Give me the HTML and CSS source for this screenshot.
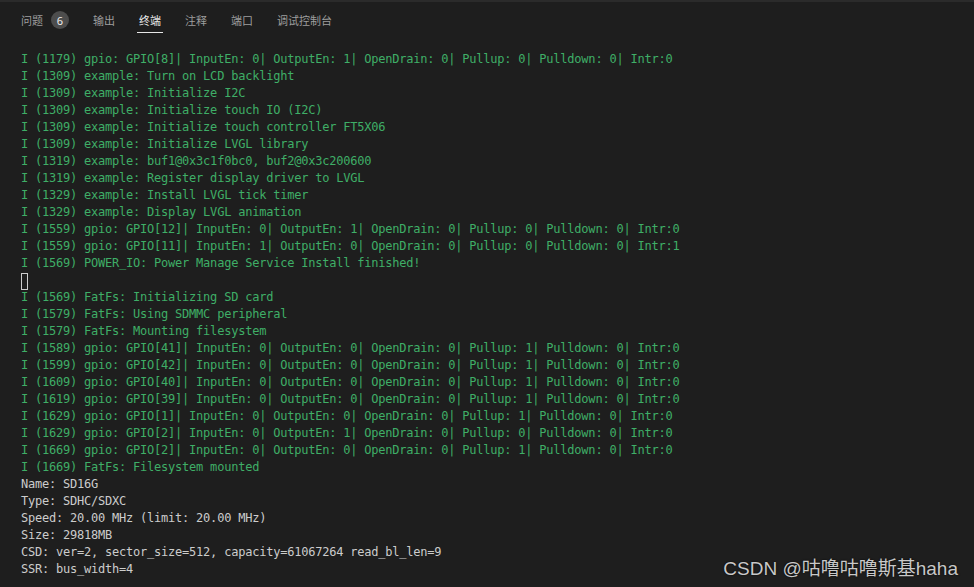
FILE: index.html
```html
<!DOCTYPE html>
<html lang="zh-CN">
<head>
    <meta charset="UTF-8">
    <meta name="viewport" content="width=device-width, initial-scale=1.0">
    <title>终端</title>
    <link rel="stylesheet" href="styles.css">
</head>
<body>
    <div class="panel">
        <div class="tabs">
            <div class="tab">问题 <span class="badge">6</span></div>
            <div class="tab">输出</div>
            <div class="tab active">终端</div>
            <div class="tab">注释</div>
            <div class="tab">端口</div>
            <div class="tab">调试控制台</div>
        </div>
        <div class="terminal">
            <div class="line green">I (1179) gpio: GPIO[8]| InputEn: 0| OutputEn: 1| OpenDrain: 0| Pullup: 0| Pulldown: 0| Intr:0</div>
            <div class="line green">I (1309) example: Turn on LCD backlight</div>
            <div class="line green">I (1309) example: Initialize I2C</div>
            <div class="line green">I (1309) example: Initialize touch IO (I2C)</div>
            <div class="line green">I (1309) example: Initialize touch controller FT5X06</div>
            <div class="line green">I (1309) example: Initialize LVGL library</div>
            <div class="line green">I (1319) example: buf1@0x3c1f0bc0, buf2@0x3c200600</div>
            <div class="line green">I (1319) example: Register display driver to LVGL</div>
            <div class="line green">I (1329) example: Install LVGL tick timer</div>
            <div class="line green">I (1329) example: Display LVGL animation</div>
            <div class="line green">I (1559) gpio: GPIO[12]| InputEn: 0| OutputEn: 1| OpenDrain: 0| Pullup: 0| Pulldown: 0| Intr:0</div>
            <div class="line green">I (1559) gpio: GPIO[11]| InputEn: 1| OutputEn: 0| OpenDrain: 0| Pullup: 0| Pulldown: 0| Intr:1</div>
            <div class="line green">I (1569) POWER_IO: Power Manage Service Install finished!</div>
            <div class="line"><span class="cursor"></span></div>
            <div class="line green">I (1569) FatFs: Initializing SD card</div>
            <div class="line green">I (1579) FatFs: Using SDMMC peripheral</div>
            <div class="line green">I (1579) FatFs: Mounting filesystem</div>
            <div class="line green">I (1589) gpio: GPIO[41]| InputEn: 0| OutputEn: 0| OpenDrain: 0| Pullup: 1| Pulldown: 0| Intr:0</div>
            <div class="line green">I (1599) gpio: GPIO[42]| InputEn: 0| OutputEn: 0| OpenDrain: 0| Pullup: 1| Pulldown: 0| Intr:0</div>
            <div class="line green">I (1609) gpio: GPIO[40]| InputEn: 0| OutputEn: 0| OpenDrain: 0| Pullup: 1| Pulldown: 0| Intr:0</div>
            <div class="line green">I (1619) gpio: GPIO[39]| InputEn: 0| OutputEn: 0| OpenDrain: 0| Pullup: 1| Pulldown: 0| Intr:0</div>
            <div class="line green">I (1629) gpio: GPIO[1]| InputEn: 0| OutputEn: 0| OpenDrain: 0| Pullup: 1| Pulldown: 0| Intr:0</div>
            <div class="line green">I (1629) gpio: GPIO[2]| InputEn: 0| OutputEn: 1| OpenDrain: 0| Pullup: 0| Pulldown: 0| Intr:0</div>
            <div class="line green">I (1669) gpio: GPIO[2]| InputEn: 0| OutputEn: 0| OpenDrain: 0| Pullup: 1| Pulldown: 0| Intr:0</div>
            <div class="line green">I (1669) FatFs: Filesystem mounted</div>
            <div class="line">Name: SD16G</div>
            <div class="line">Type: SDHC/SDXC</div>
            <div class="line">Speed: 20.00 MHz (limit: 20.00 MHz)</div>
            <div class="line">Size: 29818MB</div>
            <div class="line">CSD: ver=2, sector_size=512, capacity=61067264 read_bl_len=9</div>
            <div class="line">SSR: bus_width=4</div>
        </div>
        <div class="watermark">CSDN @咕噜咕噜斯基haha</div>
    </div>
</body>
</html>
```
FILE: styles.css
```css
html, body {
    margin: 0;
    padding: 0;
    background: #1e1e1e;
}
.panel {
    position: relative;
    width: 974px;
    height: 587px;
    overflow: hidden;
    background: #1e1e1e;
    border-top: 2px solid #2b2b2b;
    box-sizing: border-box;
}
.tabs {
    display: flex;
    align-items: center;
    gap: 20px;
    height: 36px;
    padding-left: 19px;
    font-family: "Noto Sans CJK SC", "Noto Sans", sans-serif;
    font-size: 11px;
    color: #9d9d9d;
}
.tab {
    position: relative;
    display: flex;
    align-items: center;
    padding: 0 2px;
    height: 100%;
}
.tab.active {
    color: #e7e7e7;
}
.tab.active::after {
    content: "";
    position: absolute;
    left: 0;
    right: 0;
    bottom: 5px;
    height: 1px;
    background: #e7e7e7;
}
.badge {
    display: inline-flex;
    align-items: center;
    justify-content: center;
    width: 18px;
    height: 18px;
    margin-left: 8px;
    border-radius: 50%;
    background: #4d4d4d;
    color: #f0f0f0;
    font-family: "Noto Sans", sans-serif;
    font-size: 11px;
}
.terminal {
    padding: 13px 0 0 21px;
    font-family: "DejaVu Sans Mono", monospace;
    font-size: 12px;
    letter-spacing: -0.22px;
    line-height: 17px;
    color: #cccccc;
}
.line {
    height: 17px;
    white-space: pre;
}
.green {
    color: #3fae67;
}
.cursor {
    display: inline-block;
    width: 5px;
    height: 15px;
    margin-top: 1px;
    border: 1px solid #cccccc;
    vertical-align: top;
}
.watermark {
    position: absolute;
    right: 16px;
    bottom: 7px;
    font-family: "Liberation Sans", "Noto Sans CJK SC", sans-serif;
    font-size: 19px;
    color: #c8c8c8;
    text-shadow: 0 0 2px #000;
}
```
